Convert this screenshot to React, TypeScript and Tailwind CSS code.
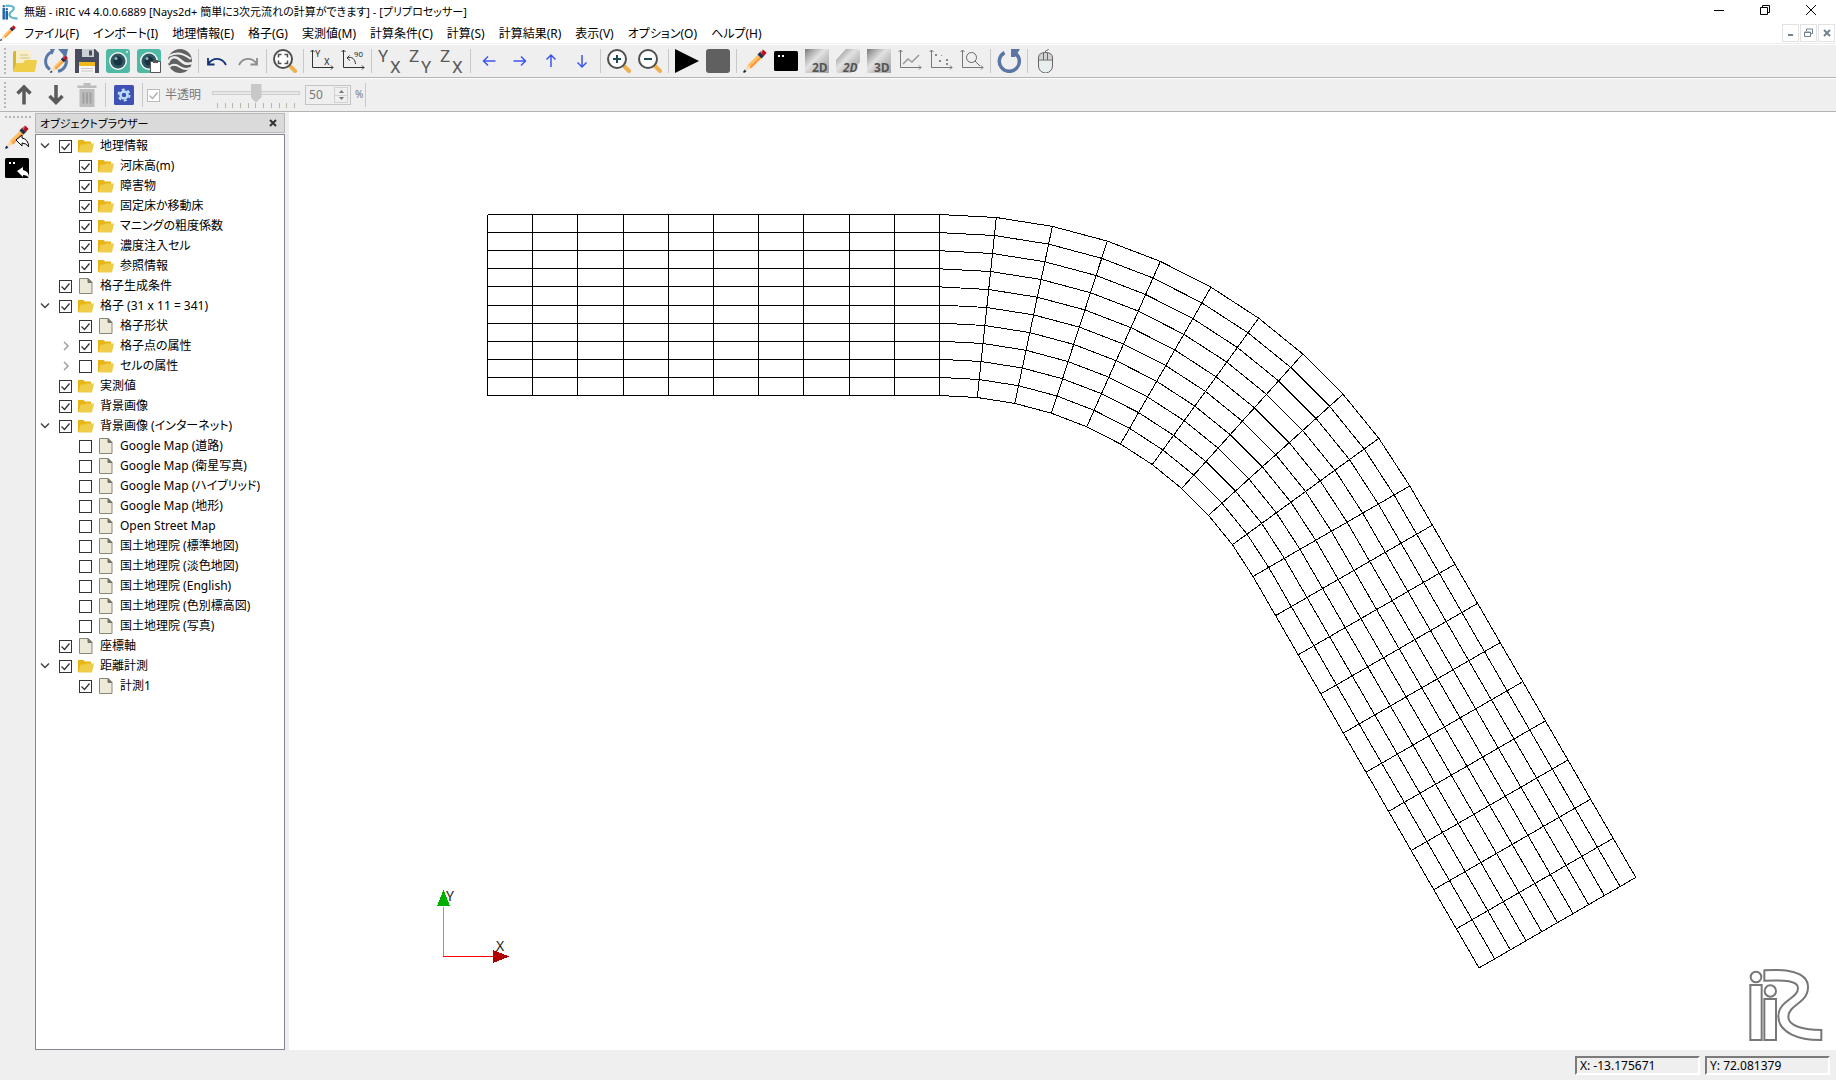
import { Fragment, type ReactNode } from "react";

const MENUS = [
  "ファイル(F)",
  "インポート(I)",
  "地理情報(E)",
  "格子(G)",
  "実測値(M)",
  "計算条件(C)",
  "計算(S)",
  "計算結果(R)",
  "表示(V)",
  "オプション(O)",
  "ヘルプ(H)",
];

type TreeItem = {
  label: string;
  level: 0 | 1;
  icon: "folder" | "file";
  checked: boolean;
  arrow?: "open" | "closed";
};

const TREE: TreeItem[] = [
  { label: "地理情報", level: 0, icon: "folder", checked: true, arrow: "open" },
  { label: "河床高(m)", level: 1, icon: "folder", checked: true },
  { label: "障害物", level: 1, icon: "folder", checked: true },
  { label: "固定床か移動床", level: 1, icon: "folder", checked: true },
  { label: "マニングの粗度係数", level: 1, icon: "folder", checked: true },
  { label: "濃度注入セル", level: 1, icon: "folder", checked: true },
  { label: "参照情報", level: 1, icon: "folder", checked: true },
  { label: "格子生成条件", level: 0, icon: "file", checked: true },
  { label: "格子 (31 x 11 = 341)", level: 0, icon: "folder", checked: true, arrow: "open" },
  { label: "格子形状", level: 1, icon: "file", checked: true },
  { label: "格子点の属性", level: 1, icon: "folder", checked: true, arrow: "closed" },
  { label: "セルの属性", level: 1, icon: "folder", checked: false, arrow: "closed" },
  { label: "実測値", level: 0, icon: "folder", checked: true },
  { label: "背景画像", level: 0, icon: "folder", checked: true },
  { label: "背景画像 (インターネット)", level: 0, icon: "folder", checked: true, arrow: "open" },
  { label: "Google Map (道路)", level: 1, icon: "file", checked: false },
  { label: "Google Map (衛星写真)", level: 1, icon: "file", checked: false },
  { label: "Google Map (ハイブリッド)", level: 1, icon: "file", checked: false },
  { label: "Google Map (地形)", level: 1, icon: "file", checked: false },
  { label: "Open Street Map", level: 1, icon: "file", checked: false },
  { label: "国土地理院 (標準地図)", level: 1, icon: "file", checked: false },
  { label: "国土地理院 (淡色地図)", level: 1, icon: "file", checked: false },
  { label: "国土地理院 (English)", level: 1, icon: "file", checked: false },
  { label: "国土地理院 (色別標高図)", level: 1, icon: "file", checked: false },
  { label: "国土地理院 (写真)", level: 1, icon: "file", checked: false },
  { label: "座標軸", level: 0, icon: "file", checked: true },
  { label: "距離計測", level: 0, icon: "folder", checked: true, arrow: "open" },
  { label: "計測1", level: 1, icon: "file", checked: true },
];

function Svg({ children, className = "size-6" }: { children: ReactNode; className?: string }) {
  return (
    <svg viewBox="0 0 24 24" fill="none" aria-hidden="true" className={className}>
      {children}
    </svg>
  );
}

function PencilShape() {
  return (
    <>
      <path d="M4.5 16 17 3.5 20.5 7 8 19.5z" fill="#ffc266" />
      <path d="M6.5 18 19 5.4 20.5 7 8 19.5z" fill="#ff9a3d" />
      <path d="M4.5 16 8 19.5 1.5 22z" fill="#fbd9b0" />
      <path d="M1 24 0 23 1.5 20.5 3.5 22.5z" fill="#16324f" />
      <path d="M14.500 5.500 17.500 2.500 21.500 6.500 18.500 9.500z" fill="#16324f" />
      <path d="M17 3.500 20 .5 23.500 4 20.500 7z" fill="#e84b5a" />
      <path d="M20.300 .8 23.500 4 20.500 7 18.700 5.200z" fill="#b3121d" />
    </>
  );
}

function TerminalShape() {
  return (
    <>
      <rect x="0" y="2" width="24" height="20" rx="1.500" fill="#000" />
      <rect x="4" y="6" width="2" height="2" fill="#fff" />
      <rect x="8" y="6" width="2" height="2" fill="#fff" />
    </>
  );
}

function Magnifier({ children }: { children: ReactNode }) {
  return (
    <Svg>
      <path d="m17 17 5 5" stroke="#f0b050" strokeWidth="4" strokeLinecap="round" />
      <circle cx="10" cy="10" r="9" fill="#fff" stroke="#4f4f4f" strokeWidth="2" />
      {children}
    </Svg>
  );
}

function AxesShape({ color }: { color: string }) {
  return <path d="M2.500 1v17.500H23M.5 3l2-2 2 2M21 16.500l2 2-2 2" stroke={color} />;
}

function PlaneIcon({ first, second }: { first: string; second: string }) {
  return (
    <Svg className="size-6 overflow-visible font-['Roboto',sans-serif]">
      <text x="0" y="13" fontSize="17" fill="#5a5a5a">{first}</text>
      <text x="12" y="24" fontSize="17" fill="#5a5a5a">{second}</text>
    </Svg>
  );
}

function DimIcon({ label, skew }: { label: string; skew?: boolean }) {
  return (
    <Svg className="size-6 overflow-visible font-['Open_Sans',sans-serif] font-bold">
      <defs>
        <linearGradient id="metal" x1="0" y1="0" x2="1" y2="1">
          <stop offset="0" stopColor="#777" />
          <stop offset=".18" stopColor="#a8a8a8" />
          <stop offset=".42" stopColor="#e2e2e2" />
          <stop offset=".6" stopColor="#c9c9c9" />
          <stop offset="1" stopColor="#a4a4a4" />
        </linearGradient>
      </defs>
      <path d={skew ? "M10 0h11q3 0 3 3v10L15 24H3q-3 0-3-4v-9z" : "M0 0h24v24H0z"} fill="url(#metal)" />
      <text x="7" y="23" fontSize="12" fill="#555" fontStyle={skew ? "italic" : "normal"}>
        {label}
      </text>
    </Svg>
  );
}

function ArrowIcon({ d }: { d: string }) {
  return (
    <Svg>
      <path d={d} stroke="#3d55f0" strokeWidth="1.500" />
    </Svg>
  );
}

const ICONS: Record<string, ReactNode> = {
  open: (
    <Svg>
      <path d="M0 4q0-2 2-2h4v19H1q-1 0-1-1z" fill="#d9b62c" />
      <path d="M3 1h13l3 3v12H3z" fill="#f7eecb" />
      <path d="M7 6h8M7 9h10" stroke="#d3c48b" />
      <path d="M4 14h6l2-3h11q1.200 0 1 1L22 22q-.3 1-1.300 1H1q-1.500 0-1-1L3 15q.3-1 1-1z" fill="#efce4a" />
    </Svg>
  ),
  reopen: (
    <Svg>
      <path d="M9 2.600A10 10 0 0 0 6 20.500M14 22.300A10 10 0 0 0 20 6" stroke="#5878a8" strokeWidth="3" />
      <path d="M6 0 8 6 11 0z" fill="#5878a8" />
      <path d="M14 0h10l-2 9z" fill="#5878a8" />
      <g transform="translate(6 6) scale(.75)">
        <PencilShape />
      </g>
    </Svg>
  ),
  save: (
    <Svg>
      <path d="M0 0h20l4 4v20H0z" fill="#474c5e" />
      <path d="M7 0h12v8H7z" fill="#ccd0d4" />
      <path d="M14 1.500h3v5h-3z" fill="#474c5e" />
      <path d="M4 13h16v11H4z" fill="#f5f5f5" />
      <path d="M4 13h16v4H4z" fill="#efb91c" />
      <path d="M6 19.500h12M6 22h12" stroke="#c6c6c6" />
    </Svg>
  ),
  camera: (
    <Svg>
      <rect width="24" height="24" rx="3" fill="#4fb9a5" />
      <circle cx="12" cy="12" r="9" fill="#f4f6f4" />
      <circle cx="12" cy="12" r="7.500" fill="#2f5560" />
      <circle cx="12" cy="12" r="4.500" fill="#173540" />
      <circle cx="10" cy="9.500" r="1.500" fill="#92b5bd" />
      <circle cx="21" cy="3" r="1" fill="#e9f5f2" />
    </Svg>
  ),
  cameraCopy: (
    <Svg>
      <rect width="24" height="24" rx="3" fill="#4fb9a5" />
      <circle cx="12" cy="12" r="9" fill="#f4f6f4" />
      <circle cx="12" cy="12" r="7.500" fill="#2f5560" />
      <circle cx="12" cy="12" r="4.500" fill="#173540" />
      <circle cx="10" cy="9.500" r="1.500" fill="#92b5bd" />
      <path d="M13.500 12.500h10v11h-10z" fill="#fff" stroke="#555" />
      <path d="M16 11h5v3h-5z" fill="#555" />
    </Svg>
  ),
  earth: (
    <Svg>
      <circle cx="12" cy="12" r="12" fill="#616161" />
      <path d="M1 7Q11 1 23 10" stroke="#efefef" strokeWidth="2" />
      <path d="M0 14C3 6 9 8 12 11s7 5 12 3" stroke="#efefef" strokeWidth="2.500" />
      <path d="M1 18c4-4 8-2 11 0s6 3 10 1" stroke="#efefef" strokeWidth="2" />
    </Svg>
  ),
  undo: (
    <Svg>
      <path d="M3 9v6.500h6.500M3 15C8 8 17 8 21 16" stroke="#16307c" strokeWidth="1.800" />
    </Svg>
  ),
  redo: (
    <Svg>
      <path d="M21 9v6.500h-6.500M21 15C16 8 7 8 3 16" stroke="#8c8c8c" strokeWidth="1.800" />
    </Svg>
  ),
  fit: (
    <Magnifier>
      <path d="M5.500 8.500v-3h3m3 0h3v3m0 3v3h-3m-3 0h-3v-3" stroke="#4f4f4f" strokeWidth="1.500" />
    </Magnifier>
  ),
  axes: (
    <Svg className="size-6 overflow-visible font-['Roboto',sans-serif]">
      <AxesShape color="#333" />
      <text x="5" y="8" fontSize="9" fill="#333">Y</text>
      <text x="14" y="16" fontSize="9" fill="#333">X</text>
    </Svg>
  ),
  rotate: (
    <Svg className="size-6 overflow-visible font-['Roboto',sans-serif]">
      <AxesShape color="#333" />
      <path d="M6 9c5-2 8 1 8.500 6M8.500 6.500 6 9l3 2.500" stroke="#333" />
      <text x="13" y="8" fontSize="8" fill="#333">90</text>
    </Svg>
  ),
  yx: <PlaneIcon first="Y" second="X" />,
  zy: <PlaneIcon first="Z" second="Y" />,
  zx: <PlaneIcon first="Z" second="X" />,
  left: <ArrowIcon d="M18.500 12H6.500M11 7.500 6.500 12l4.500 4.500" />,
  right: <ArrowIcon d="M5.500 12h12M13 7.500l4.500 4.500-4.500 4.500" />,
  up: <ArrowIcon d="M12 18V6M7.500 10.500 12 6l4.500 4.500" />,
  down: <ArrowIcon d="M12 6v12M7.500 13.500 12 18l4.500-4.500" />,
  zoomIn: (
    <Magnifier>
      <path d="M10 6v8M6 10h8" stroke="#1c4a55" strokeWidth="2" />
    </Magnifier>
  ),
  zoomOut: (
    <Magnifier>
      <path d="M6 10h8" stroke="#1c4a55" strokeWidth="2" />
    </Magnifier>
  ),
  play: (
    <Svg>
      <path d="M0 0 24 12 0 24z" fill="#000" />
    </Svg>
  ),
  stop: (
    <Svg>
      <rect width="24" height="24" rx="3" fill="#606060" />
    </Svg>
  ),
  pencil: (
    <Svg>
      <PencilShape />
    </Svg>
  ),
  terminal: (
    <Svg>
      <TerminalShape />
    </Svg>
  ),
  post2d: <DimIcon label="2D" />,
  birdEye: <DimIcon label="2D" skew />,
  post3d: <DimIcon label="3D" />,
  line: (
    <Svg>
      <AxesShape color="#777" />
      <path d="m5 15 5-5 4 3 7-7" stroke="#999" strokeWidth="1.500" />
    </Svg>
  ),
  scatter: (
    <Svg>
      <AxesShape color="#777" />
      <path d="M6 5h2v2H6zM10 11h2v2h-2zM17 10h2v2h-2zM17 14h2v2h-2zM12 6h1v1h-1z" fill="#888" />
    </Svg>
  ),
  verify: (
    <Svg>
      <AxesShape color="#777" />
      <circle cx="11.500" cy="8.500" r="5" stroke="#666" />
      <path d="m15 12 5 5" stroke="#666" />
    </Svg>
  ),
  reload: (
    <Svg>
      <path d="M7.500 3.600A10 10 0 1 0 18.500 4.500" stroke="#5b76a6" strokeWidth="3.500" />
      <path d="M14 0h9l-5 8-4 0z" fill="#5b76a6" />
    </Svg>
  ),
  mouse: (
    <Svg>
      <path d="M4.500 10V9q0-5 5-5.500h4q5 .5 5 5.500v1z" fill="#d3d3d3" />
      <path d="M4.500 11h14v6a7 7 0 0 1-14 0z" fill="#e7eeee" />
      <path d="M4.500 9q0-5.500 7-5.500t7 5.500v8a7 7 0 0 1-14 0zM4.500 11h14M9.500 4v7M13.500 4v7M11.500 3.500q-.5-2 1-2t2-1.500" stroke="#666" />
    </Svg>
  ),
  moveUp: (
    <Svg>
      <path d="M11 21.500V4M4.500 10.500 11 4l6.500 6.500" stroke="#5a5a5a" strokeWidth="3.500" />
    </Svg>
  ),
  moveDown: (
    <Svg>
      <path d="M12 2v17.500M5.500 13 12 19.500l6.500-6.500" stroke="#5a5a5a" strokeWidth="3.500" />
    </Svg>
  ),
  trash: (
    <Svg>
      <path d="M2.500 2.500h19v2.500h-19zM8.500 0h7v3h-7zM4.500 6h15v18h-15z" fill="#bdbdbd" />
      <path d="M8.500 9.500v11M12 9.500v11M15.500 9.500v11" stroke="#a0a0a0" strokeWidth="2" />
    </Svg>
  ),
  settings: (
    <Svg>
      <rect x="2" y="2" width="20" height="20" rx="1.500" fill="#3f51b5" />
      <circle cx="12" cy="12" r="3.500" stroke="#bbdefb" strokeWidth="2.500" />
      <circle cx="12" cy="12" r="5.500" stroke="#bbdefb" strokeWidth="2" strokeDasharray="2.900 2.860" />
    </Svg>
  ),
};

const MAIN_TOOLS: string[][] = [
  ["open", "reopen", "save", "camera", "cameraCopy", "earth"],
  ["undo", "redo"],
  ["fit"],
  ["axes", "rotate"],
  ["yx", "zy", "zx"],
  ["left", "right", "up", "down"],
  ["zoomIn", "zoomOut"],
  ["play", "stop"],
  ["pencil", "terminal", "post2d", "birdEye", "post3d", "line", "scatter", "verify"],
  ["reload"],
  ["mouse"],
];

function Grip() {
  return <div className="mx-1 h-[26px] w-[2px] bg-[repeating-linear-gradient(#b8b8b8_0_2px,transparent_2px_4px)]" />;
}

function Separator() {
  return (
    <div className="flex w-[6px] pl-[2px]">
      <div className="h-6 w-px bg-[#c8c8c8]" />
    </div>
  );
}

function ToolButton({ name, disabled }: { name: string; disabled?: boolean }) {
  return (
    <button type="button" aria-label={name} disabled={disabled} className="flex h-8 w-[31px] items-center pl-[3px]">
      {ICONS[name]}
    </button>
  );
}

function CheckBox({ id, checked, disabled }: { id: string; checked: boolean; disabled?: boolean }) {
  return (
    <span className="grid size-[13px] shrink-0">
      <input
        id={id}
        type="checkbox"
        defaultChecked={checked}
        disabled={disabled}
        className="peer col-start-1 row-start-1 size-[13px] appearance-none border border-[#333] bg-white disabled:border-[#bbb]"
      />
      <svg
        viewBox="0 0 13 13"
        fill="none"
        className="pointer-events-none invisible col-start-1 row-start-1 size-[13px] stroke-[#333] peer-checked:visible peer-disabled:stroke-[#aaa]"
      >
        <path d="m2.500 6.500 3 3 5-6" strokeWidth="1.300" />
      </svg>
    </span>
  );
}

function LogoPaths() {
  return (
    <>
      <circle cx="649" cy="80" r="16" />
      <path d="M632 104h34v165h-34z" />
      <circle cx="692" cy="122" r="17" />
      <path d="M674 146h35v123h-35z" />
    </>
  );
}

const LOGO_CURVE =
  "M674 60C730 56 805 60 805 110 805 160 746 162 746 200 746 228 795 239 845 239V269C780 270 716 248 716 198 716 150 775 146 775 113 775 92 735 88 674 91Z";

function TitleBar() {
  return (
    <header className="flex h-[22px] items-start pl-[2px] pr-[2px]">
      <svg viewBox="625 50 225 225" className="mt-1 size-4" aria-hidden="true">
        <g fill="#1d63a8">
          <LogoPaths />
        </g>
        <path d={LOGO_CURVE} fill="#55b4c8" />
      </svg>
      <h1 className="ml-[6px] mt-1 flex-1 text-[11px] leading-4">無題 - iRIC v4 4.0.0.6889 [Nays2d+ 簡単に3次元流れの計算ができます] - [プリプロセッサー]</h1>
      <button type="button" aria-label="最小化" className="flex h-5 w-[46px] items-center justify-center">
        <svg viewBox="0 0 10 10" className="size-[10px]" stroke="#000">
          <path d="M0 5.500h10" />
        </svg>
      </button>
      <button type="button" aria-label="元に戻す" className="flex h-5 w-[46px] items-center justify-center">
        <svg viewBox="0 0 10 10" className="size-[10px]" stroke="#000" fill="none">
          <path d="M.5 2.500h7v7h-7zM2.500 2.500v-2h7v7h-2" />
        </svg>
      </button>
      <button type="button" aria-label="閉じる" className="flex h-5 w-[46px] items-center justify-center">
        <svg viewBox="0 0 10 10" className="size-[10px]" stroke="#000">
          <path d="m0 0 10 10M10 0 0 10" />
        </svg>
      </button>
    </header>
  );
}

function MdiButton({ label, children }: { label: string; children: ReactNode }) {
  return (
    <button type="button" aria-label={label} className="flex h-[18px] w-[17px] items-center justify-center border border-[#e2e2e2]">
      <svg viewBox="0 0 9 9" className="size-[9px]" fill="none" stroke="#73828f">
        {children}
      </svg>
    </button>
  );
}

function MenuBar() {
  return (
    <nav className="flex h-[22px] items-center border-b border-[#ededed]">
      <Svg className="size-4">
        <PencilShape />
      </Svg>
      <div className="ml-2 flex flex-1 gap-[14px] pt-[2px]">
        {MENUS.map((menu) => (
          <button key={menu} type="button" className="text-xs leading-5">
            {menu}
          </button>
        ))}
      </div>
      <div className="flex gap-px pr-px">
        <MdiButton label="子ウィンドウを最小化">
          <path d="M2 7h5" strokeWidth="2" />
        </MdiButton>
        <MdiButton label="子ウィンドウを元に戻す">
          <path d="M2.500 3V1h6v4.500H7M.5 4h6v4.500h-6zM.5 4.500h6" />
        </MdiButton>
        <MdiButton label="子ウィンドウを閉じる">
          <path d="m2 2 6 6M8 2 2 8" strokeWidth="2" />
        </MdiButton>
      </div>
    </nav>
  );
}

function MainToolbar() {
  return (
    <div className="mt-px flex h-[33px] items-center border-b border-[#b4b4b4] bg-[#efefef]">
      <Grip />
      {MAIN_TOOLS.map((group, i) => (
        <Fragment key={group[0]}>
          {i > 0 && <Separator />}
          {group.map((name) => (
            <ToolButton key={name} name={name} />
          ))}
        </Fragment>
      ))}
    </div>
  );
}

function ObjectToolbar() {
  return (
    <div className="mt-px flex h-[33px] items-center border-b border-[#b4b4b4] bg-[#efefef] text-xs text-[#787878]">
      <Grip />
      <ToolButton name="moveUp" />
      <ToolButton name="moveDown" />
      <ToolButton name="trash" disabled />
      <Separator />
      <ToolButton name="settings" />
      <Separator />
      <div className="ml-px flex items-center gap-[5px]">
        <CheckBox id="translucent" checked disabled />
        <label htmlFor="translucent">半透明</label>
      </div>
      <div className="ml-[11px] flex w-[88px] flex-col">
        <input
          type="range"
          aria-label="不透明度"
          defaultValue={50}
          disabled
          className="h-5 w-full appearance-none bg-transparent [&::-webkit-slider-runnable-track]:h-1 [&::-webkit-slider-runnable-track]:border [&::-webkit-slider-runnable-track]:border-[#d0d0d0] [&::-webkit-slider-runnable-track]:bg-[#e7e7e7] [&::-webkit-slider-thumb]:-mt-2 [&::-webkit-slider-thumb]:h-[19px] [&::-webkit-slider-thumb]:w-[11px] [&::-webkit-slider-thumb]:appearance-none [&::-webkit-slider-thumb]:bg-[#c8c8c8] [&::-webkit-slider-thumb]:[clip-path:polygon(0_0,100%_0,100%_72%,50%_100%,0_72%)]"
        />
        <div className="flex h-[5px] justify-between px-[5px]">
          {Array.from({ length: 11 }, (_, i) => (
            <span key={i} className="w-px bg-[#b9b5a4]" />
          ))}
        </div>
      </div>
      <div className="ml-[5px] flex h-5 w-[46px] border border-[#c4c4c4]">
        <input type="text" aria-label="透明度" defaultValue="50" disabled className="w-[28px] pl-[3px]" />
        <div className="my-px flex w-[14px] flex-col border border-[#d2d2d2]">
          <button type="button" aria-label="増やす" disabled className="flex flex-1 items-center justify-center">
            <svg viewBox="0 0 5 3" className="h-[3px] w-[5px]" fill="#777">
              <path d="M0 3h5L2.500 0z" />
            </svg>
          </button>
          <button type="button" aria-label="減らす" disabled className="flex flex-1 items-center justify-center border-t border-[#d2d2d2]">
            <svg viewBox="0 0 5 3" className="h-[3px] w-[5px]" fill="#777">
              <path d="M0 0h5L2.500 3z" />
            </svg>
          </button>
        </div>
      </div>
      <span className="ml-1 text-[10px]">%</span>
      <Separator />
    </div>
  );
}

function SideStrip() {
  return (
    <aside className="flex w-[35px] flex-col bg-[#efefef] pl-[5px] pt-1">
      <div className="h-[2px] w-[26px] bg-[repeating-linear-gradient(90deg,#b8b8b8_0_2px,transparent_2px_4px)]" />
      <button type="button" aria-label="プリプロセッサー" className="mt-[3px] flex h-[31px] items-center">
        <Svg>
          <PencilShape />
          <path d="m11 15 6-5v3q6 1 7 9-3-4-7-4v3z" fill="#fff" stroke="#000" />
        </Svg>
      </button>
      <button type="button" aria-label="ソルバーコンソール" className="flex h-[31px] items-center">
        <Svg>
          <TerminalShape />
          <path d="m12 15 6-4v3q6 1 6 8-2-3-6-3v2z" fill="#fff" />
        </Svg>
      </button>
    </aside>
  );
}

function TreeIcon({ icon }: { icon: TreeItem["icon"] }) {
  return icon === "folder" ? (
    <svg viewBox="0 0 16 14" className="mx-[6px] h-[14px] w-4 shrink-0" aria-hidden="true">
      <path d="M0 1h5.500l1.500 1.500h6V6H3l-2 7H0z" fill="#e8b416" />
      <path d="M3 5.500h3.500L8 4.500h8l-2 9H.5z" fill="#efcd48" />
    </svg>
  ) : (
    <svg viewBox="0 0 16 16" className="mx-[6px] size-4 shrink-0" aria-hidden="true">
      <path d="M1.500.5h8.500l4 4v11H1.500z" fill="#ece9d8" stroke="#8b8878" />
      <path d="M10 .5v4h4z" fill="#77756a" stroke="#77756a" />
    </svg>
  );
}

function TreeRow({ item, index }: { item: TreeItem; index: number }) {
  const id = `object-${index}`;
  return (
    <li className={item.level === 0 ? "flex h-5 items-center" : "flex h-5 items-center pl-5"}>
      <span className="flex w-[23px] shrink-0 items-center pl-1">
        {item.arrow && (
          <svg viewBox="0 0 10 10" className="size-[10px]" fill="none" strokeWidth="1.500" aria-hidden="true">
            {item.arrow === "open" ? (
              <path d="m1 2.500 4 4 4-4" stroke="#444" />
            ) : (
              <path d="m4 1 4 4-4 4" stroke="#a0a0a0" />
            )}
          </svg>
        )}
      </span>
      <CheckBox id={id} checked={item.checked} />
      <TreeIcon icon={item.icon} />
      <label htmlFor={id} className="whitespace-nowrap text-xs">
        {item.label}
      </label>
    </li>
  );
}

function ObjectBrowser() {
  return (
    <section className="flex w-[250px] flex-col bg-[#efefef] pt-px">
      <div className="flex h-5 items-center justify-between border border-[#b8b8b8] bg-[#dadada] pl-1 pr-[7px]">
        <h2 className="pt-px text-[11px] leading-4">オブジェクトブラウザー</h2>
        <button type="button" aria-label="閉じる">
          <svg viewBox="0 0 8 8" className="size-2" stroke="#333" strokeWidth="2">
            <path d="m1 1 6 6M7 1 1 7" />
          </svg>
        </button>
      </div>
      <ul className="mt-px flex-1 border border-[#828790] bg-white pt-px">
        {TREE.map((item, i) => (
          <TreeRow key={item.label} item={item} index={i} />
        ))}
      </ul>
    </section>
  );
}

// Channel: straight reach, 60 degree bend, straight reach. 31 x 11 nodes.
const CELL = 45.2;
const WIDTH = 181;
const RADIUS = 543;
const START = { x: 198.5, y: 102.5 };

function gridNode(i: number, j: number): [number, number] {
  const offset = (WIDTH * j) / 10;
  if (i <= 10) return [START.x + CELL * i, START.y + offset];
  const angle = (Math.min(i - 10, 10) * 6 * Math.PI) / 180;
  const along = CELL * Math.max(i - 20, 0);
  const r = RADIUS - offset;
  return [
    START.x + CELL * 10 + r * Math.sin(angle) + along * Math.cos(angle),
    START.y + RADIUS - r * Math.cos(angle) + along * Math.sin(angle),
  ];
}

const toPoints = (nodes: [number, number][]) => nodes.map(([x, y]) => `${x.toFixed(1)},${y.toFixed(1)}`).join(" ");

const GRID_LINES = [
  ...Array.from({ length: 31 }, (_, i) => toPoints(Array.from({ length: 11 }, (_, j) => gridNode(i, j)))),
  ...Array.from({ length: 11 }, (_, j) => toPoints(Array.from({ length: 31 }, (_, i) => gridNode(i, j)))),
];

function Canvas() {
  return (
    <main className="relative ml-1 min-w-0 flex-1 overflow-hidden bg-white">
      <svg className="block size-full" fill="none" stroke="#000" shapeRendering="crispEdges" role="img" aria-label="格子">
        {GRID_LINES.map((points) => (
          <polyline key={points} points={points} />
        ))}
      </svg>
      <svg
        viewBox="0 0 80 80"
        className="absolute bottom-[85px] left-[145px] size-20 overflow-visible font-['Noto_Sans',sans-serif]"
        shapeRendering="crispEdges"
        aria-hidden="true"
      >
        <path d="M9.500 71V22" stroke="#00ff00" />
        <path d="M9 71.500h50" stroke="#ff0000" />
        <path d="M9.500 5 16 21H3z" fill="#00b000" />
        <path d="M75 71.500 59 65v13z" fill="#b00000" />
        <text x="12" y="16" fontSize="14" fill="#222">Y</text>
        <text x="62" y="66" fontSize="14" fill="#222">X</text>
      </svg>
      <svg viewBox="625 50 225 225" className="absolute bottom-2 right-[13px] size-[75px]" fill="none" stroke="#777" strokeWidth="6" aria-hidden="true">
        <LogoPaths />
        <path d={LOGO_CURVE} />
      </svg>
    </main>
  );
}

function StatusBar() {
  return (
    <footer className="flex h-[30px] items-center justify-end gap-[5px] pr-[6px] text-xs">
      {["X: -13.175671", "Y: 72.081379"].map((text) => (
        <output
          key={text}
          className="flex h-[19px] w-[125px] items-center border-2 border-b-white border-l-[#7b7b7b] border-r-white border-t-[#7b7b7b] pl-[3px] pt-px leading-4"
        >
          {text}
        </output>
      ))}
    </footer>
  );
}

export default function App() {
  return (
    <div className="flex h-screen flex-col bg-[#efefef] font-['Noto_Sans','Noto_Sans_CJK_JP',sans-serif] text-black [font-feature-settings:'palt']">
      <div className="flex flex-col bg-white">
        <TitleBar />
        <MenuBar />
        <MainToolbar />
        <ObjectToolbar />
      </div>
      <div className="flex min-h-0 flex-1">
        <SideStrip />
        <ObjectBrowser />
        <Canvas />
      </div>
      <StatusBar />
    </div>
  );
}
